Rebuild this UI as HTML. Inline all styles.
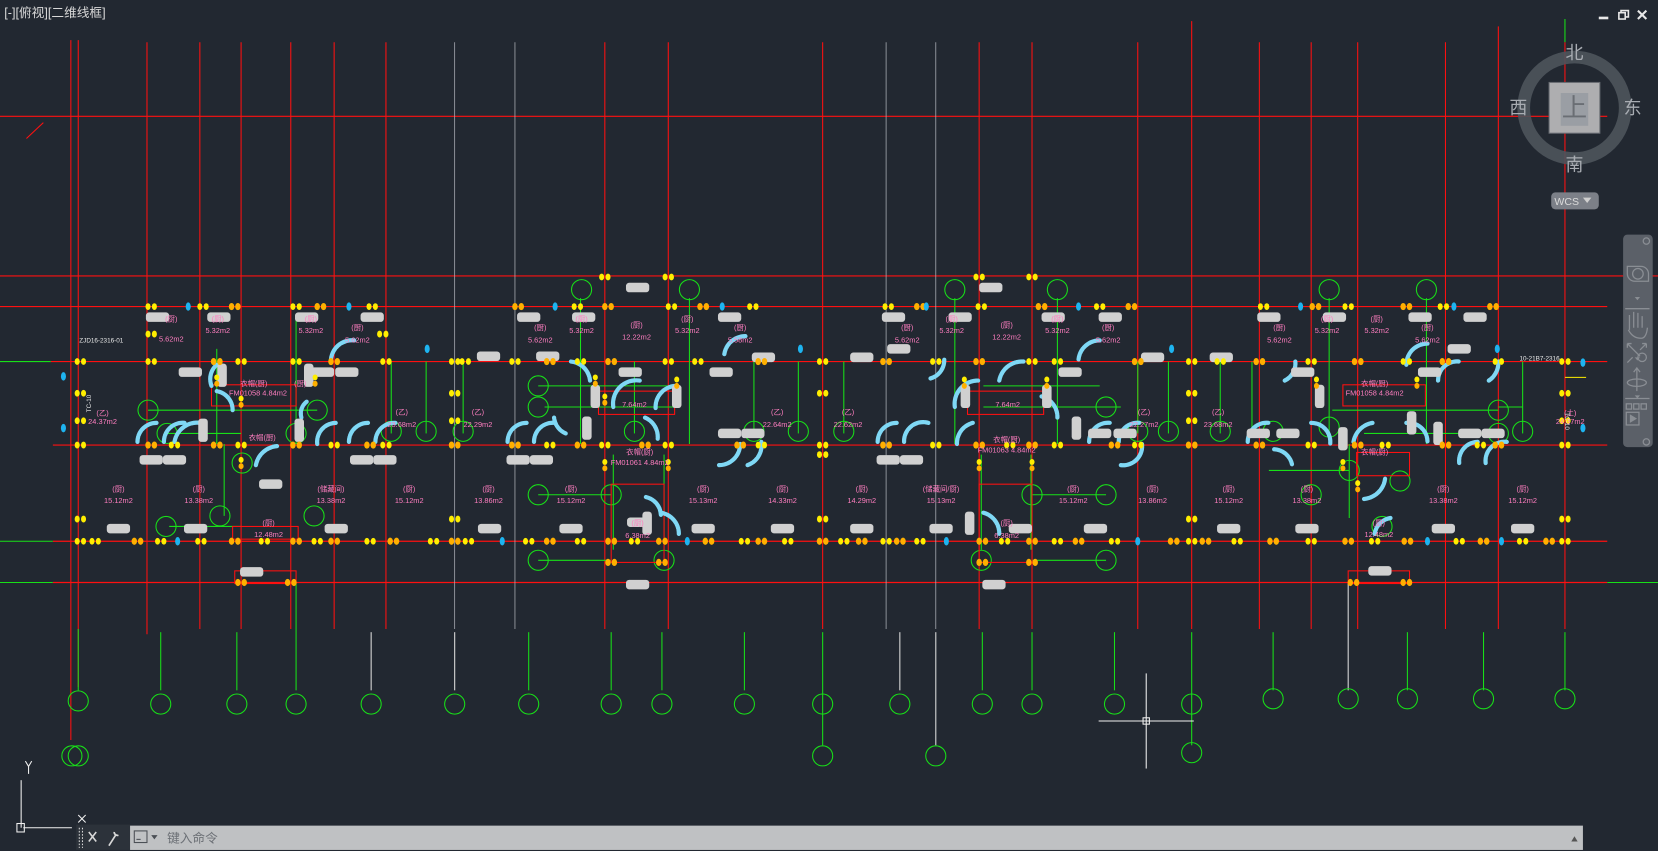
<!DOCTYPE html>
<html><head><meta charset="utf-8">
<style>
html,body{margin:0;padding:0;background:#222831;overflow:hidden}
svg{display:block}
text{font-family:"Liberation Sans","Noto Sans CJK SC",sans-serif}
</style></head><body>
<svg width="1658" height="851" viewBox="0 0 1568 805" preserveAspectRatio="none" xmlns="http://www.w3.org/2000/svg">
<defs>
<g id="p"><ellipse cx="-3" cy="0" rx="2.4" ry="3.2" fill="#ffee00"/><ellipse cx="3" cy="0" rx="2.4" ry="3.2" fill="#ffee00"/></g>
<g id="o"><ellipse cx="-3" cy="0" rx="2.6" ry="3.4" fill="#ffb000"/><ellipse cx="3" cy="0" rx="2.6" ry="3.4" fill="#ffb000"/></g>
<g id="v"><ellipse cx="0" cy="-3" rx="2.4" ry="2.8" fill="#ffee00"/><ellipse cx="0" cy="3" rx="2.4" ry="2.8" fill="#ffb000"/></g>
<ellipse id="b" cx="0" cy="0" rx="2.4" ry="4" fill="#1eb4f0"/>
<rect id="g" x="-11" y="-4.5" width="22" height="9" rx="3" fill="#d0d0d0"/>
<rect id="gv" x="-4.5" y="-11" width="9" height="22" rx="3" fill="#d0d0d0"/>
<circle id="c" r="9.5" fill="none" stroke="#18e018" stroke-width="1"/>
</defs>

<text x="4" y="16" font-size="12" fill="#d8d8d8">[-][俯视][二维线框]</text>

<g stroke="#ff1010" stroke-width="1.1">
<line x1="0" y1="110" x2="1520" y2="110"/>
<line x1="0" y1="261" x2="1568" y2="261"/>
<line x1="0" y1="290" x2="1520" y2="290"/>
<line x1="48" y1="342" x2="1520" y2="342"/>
<line x1="50" y1="421" x2="1520" y2="421"/>
<line x1="50" y1="512" x2="1520" y2="512"/>
<line x1="50" y1="551" x2="1520" y2="551"/>
<line x1="25" y1="131" x2="41" y2="116" stroke-width="1"/>
</g>
<g stroke="#18e018" stroke-width="1">
<line x1="0" y1="342" x2="48" y2="342"/><line x1="0" y1="512" x2="50" y2="512"/><line x1="0" y1="551" x2="50" y2="551"/>
<line x1="1520" y1="551" x2="1568" y2="551"/><line x1="1480" y1="18" x2="1480" y2="40"/>
</g>

<g stroke="#ff1010" stroke-width="1">
<line x1="67" y1="38" x2="67" y2="700"/><line x1="74" y1="38" x2="74" y2="650"/>
<line x1="139" y1="40" x2="139" y2="600"/>
<line x1="189" y1="40" x2="189" y2="595"/><line x1="228" y1="40" x2="228" y2="595"/>
<line x1="275" y1="40" x2="275" y2="595"/>
<line x1="316" y1="40" x2="316" y2="595"/><line x1="365" y1="40" x2="365" y2="595"/>
<line x1="430" y1="40" x2="430" y2="595" stroke="#b0b4ba" stroke-width="0.7"/>
<line x1="487" y1="40" x2="487" y2="595" stroke="#b0b4ba" stroke-width="0.7"/>
<line x1="572" y1="40" x2="572" y2="595"/><line x1="632" y1="40" x2="632" y2="595"/>
<line x1="778" y1="40" x2="778" y2="595"/>
<line x1="838" y1="40" x2="838" y2="595" stroke="#b0b4ba" stroke-width="0.7"/>
<line x1="885" y1="40" x2="885" y2="595" stroke="#b0b4ba" stroke-width="0.7"/>
<line x1="926" y1="40" x2="926" y2="595"/><line x1="976" y1="40" x2="976" y2="595"/>
<line x1="1076" y1="40" x2="1076" y2="595"/><line x1="1127" y1="20" x2="1127" y2="595"/>
<line x1="1191" y1="40" x2="1191" y2="595"/><line x1="1240" y1="40" x2="1240" y2="595"/>
<line x1="1284" y1="40" x2="1284" y2="595"/><line x1="1367" y1="40" x2="1367" y2="595"/>
<line x1="1417" y1="25" x2="1417" y2="595"/><line x1="1480" y1="40" x2="1480" y2="595"/>
</g>

<g stroke="#18e018" stroke-width="1" fill="none">
<line x1="74" y1="595" x2="74" y2="653"/><line x1="152" y1="598" x2="152" y2="653"/>
<line x1="224" y1="598" x2="224" y2="653"/><line x1="280" y1="551" x2="280" y2="653"/>
<line x1="351" y1="598" x2="351" y2="653" stroke="#ddd"/><line x1="430" y1="598" x2="430" y2="653" stroke="#ddd"/>
<line x1="500" y1="598" x2="500" y2="653"/><line x1="578" y1="598" x2="578" y2="653"/>
<line x1="626" y1="598" x2="626" y2="653"/><line x1="704" y1="598" x2="704" y2="653"/>
<line x1="778" y1="598" x2="778" y2="705"/><line x1="851" y1="598" x2="851" y2="653" stroke="#ddd"/>
<line x1="885" y1="598" x2="885" y2="705" stroke="#ddd"/><line x1="929" y1="598" x2="929" y2="653"/>
<line x1="976" y1="598" x2="976" y2="653"/><line x1="1054" y1="598" x2="1054" y2="653"/>
<line x1="1127" y1="598" x2="1127" y2="705"/><line x1="1204" y1="598" x2="1204" y2="653"/>
<line x1="1275" y1="551" x2="1275" y2="653" stroke="#ddd"/><line x1="1331" y1="598" x2="1331" y2="653"/>
<line x1="1403" y1="598" x2="1403" y2="653"/><line x1="1480" y1="598" x2="1480" y2="653"/>
</g>
<g>
<use href="#c" x="74" y="663"/><use href="#c" x="152" y="666"/><use href="#c" x="224" y="666"/><use href="#c" x="280" y="666"/>
<use href="#c" x="351" y="666"/><use href="#c" x="430" y="666"/><use href="#c" x="500" y="666"/><use href="#c" x="578" y="666"/>
<use href="#c" x="626" y="666"/><use href="#c" x="704" y="666"/><use href="#c" x="778" y="666"/><use href="#c" x="851" y="666"/>
<use href="#c" x="929" y="666"/><use href="#c" x="976" y="666"/><use href="#c" x="1054" y="666"/><use href="#c" x="1127" y="666"/>
<use href="#c" x="1204" y="661"/><use href="#c" x="1275" y="661"/><use href="#c" x="1331" y="661"/><use href="#c" x="1403" y="661"/><use href="#c" x="1480" y="661"/>
<use href="#c" x="68" y="715"/><use href="#c" x="74" y="715"/><use href="#c" x="778" y="715"/><use href="#c" x="885" y="715"/><use href="#c" x="1127" y="712"/>
</g>

<g stroke="#18e018" stroke-width="1" fill="none">
<line x1="140" y1="388" x2="300" y2="388"/><line x1="158" y1="410" x2="228" y2="410"/>
<line x1="205" y1="330" x2="205" y2="420"/><line x1="280" y1="300" x2="280" y2="420"/>
<line x1="160" y1="498" x2="228" y2="498"/><line x1="212" y1="420" x2="212" y2="488"/>
<line x1="549" y1="282" x2="549" y2="420"/><line x1="652" y1="282" x2="652" y2="420"/>
<line x1="509" y1="365" x2="640" y2="365"/><line x1="515" y1="385" x2="640" y2="385"/>
<line x1="509" y1="530" x2="578" y2="530"/><line x1="509" y1="468" x2="578" y2="468"/>
<line x1="580" y1="430" x2="580" y2="520"/><line x1="628" y1="430" x2="628" y2="520"/>
<line x1="600" y1="342" x2="600" y2="410"/><line x1="713" y1="342" x2="713" y2="410"/>
<line x1="755" y1="342" x2="755" y2="410"/><line x1="798" y1="342" x2="798" y2="410"/>
<line x1="903" y1="282" x2="903" y2="420"/><line x1="1000" y1="282" x2="1000" y2="420"/>
<line x1="930" y1="365" x2="1040" y2="365"/><line x1="930" y1="385" x2="1060" y2="385"/>
<line x1="976" y1="468" x2="1046" y2="468"/><line x1="976" y1="530" x2="1046" y2="530"/>
<line x1="975" y1="430" x2="975" y2="520"/><line x1="928" y1="430" x2="928" y2="520"/>
<line x1="1076" y1="342" x2="1076" y2="410"/><line x1="1154" y1="342" x2="1154" y2="410"/>
<line x1="1257" y1="282" x2="1257" y2="420"/><line x1="1349" y1="282" x2="1349" y2="420"/>
<line x1="1260" y1="388" x2="1417" y2="388"/><line x1="1290" y1="410" x2="1417" y2="410"/>
<line x1="1276" y1="420" x2="1276" y2="490"/><line x1="1200" y1="445" x2="1276" y2="445"/>
<line x1="1440" y1="342" x2="1440" y2="410"/><line x1="370" y1="342" x2="370" y2="410"/><line x1="403" y1="342" x2="403" y2="410"/>
<line x1="438" y1="342" x2="438" y2="410"/><line x1="1105" y1="342" x2="1105" y2="410"/><line x1="1184" y1="342" x2="1184" y2="410"/>
<line x1="1417" y1="385" x2="1440" y2="385"/><line x1="1480" y1="357" x2="1500" y2="357" stroke="#ffee00"/>
</g>
<g>
<use href="#c" x="140" y="388"/><use href="#c" x="158" y="410"/><use href="#c" x="157" y="498"/><use href="#c" x="208" y="488"/>
<use href="#c" x="297" y="488"/><use href="#c" x="229" y="438"/><use href="#c" x="280" y="410"/><use href="#c" x="300" y="388"/>
<use href="#c" x="550" y="274"/><use href="#c" x="652" y="274"/><use href="#c" x="903" y="274"/><use href="#c" x="1000" y="274"/>
<use href="#c" x="1257" y="274"/><use href="#c" x="1349" y="274"/><use href="#c" x="509" y="365"/><use href="#c" x="509" y="385"/>
<use href="#c" x="509" y="468"/><use href="#c" x="509" y="530"/><use href="#c" x="600" y="408"/><use href="#c" x="713" y="408"/>
<use href="#c" x="755" y="408"/><use href="#c" x="798" y="408"/><use href="#c" x="628" y="530"/><use href="#c" x="578" y="468"/>
<use href="#c" x="1046" y="385"/><use href="#c" x="1046" y="468"/><use href="#c" x="1046" y="530"/><use href="#c" x="976" y="468"/>
<use href="#c" x="928" y="530"/><use href="#c" x="1076" y="408"/><use href="#c" x="1154" y="408"/><use href="#c" x="1105" y="408"/>
<use href="#c" x="1257" y="404"/><use href="#c" x="1417" y="388"/><use href="#c" x="1417" y="410"/><use href="#c" x="1276" y="445"/>
<use href="#c" x="1307" y="498"/><use href="#c" x="1324" y="455"/><use href="#c" x="1240" y="468"/><use href="#c" x="1204" y="408"/>
<use href="#c" x="370" y="408"/><use href="#c" x="438" y="408"/><use href="#c" x="403" y="408"/><use href="#c" x="1440" y="408"/>
</g>

<g stroke="#ff1010" stroke-width="1" fill="none">
<rect x="200" y="364" width="80" height="20"/><rect x="220" y="498" width="62" height="12"/>
<rect x="578" y="458" width="50" height="74"/><rect x="566" y="370" width="72" height="22"/>
<rect x="926" y="458" width="50" height="74"/><rect x="915" y="370" width="72" height="22"/>
<rect x="1270" y="364" width="78" height="20"/><rect x="1283" y="428" width="50" height="22"/>
<rect x="222" y="540" width="58" height="12"/><rect x="1275" y="540" width="58" height="12"/>
</g>

<g stroke="#7fd8f5" stroke-width="4" fill="none" stroke-dasharray="5 1.2" stroke-linecap="round">
<path d="M130 418 A18 18 0 0 1 148 400"/><path d="M155 418 A18 18 0 0 1 175 400"/><path d="M165 418 A22 22 0 0 1 190 400"/>
<path d="M220 388 A18 18 0 0 0 205 370"/><path d="M200 365 A18 18 0 0 1 205 345"/><path d="M242 440 A22 22 0 0 1 262 422"/>
<path d="M285 395 A14 14 0 0 1 290 380"/><path d="M300 420 A18 18 0 0 1 318 400"/><path d="M313 340 A20 20 0 0 1 335 322"/>
<path d="M330 418 A18 18 0 0 1 348 400"/><path d="M355 418 A18 18 0 0 1 374 400"/>
<path d="M480 418 A18 18 0 0 1 498 400"/><path d="M505 418 A18 18 0 0 1 525 400"/><path d="M535 410 A18 18 0 0 1 524 395"/>
<path d="M540 342 A20 20 0 0 1 558 360"/><path d="M580 385 A22 22 0 0 1 605 360"/><path d="M620 386 A20 20 0 0 1 640 365"/>
<path d="M610 395 A20 20 0 0 1 622 415"/><path d="M625 485 A20 20 0 0 1 642 505"/><path d="M685 335 A20 20 0 0 1 705 318"/>
<path d="M680 440 A20 20 0 0 0 700 420"/><path d="M707 440 A20 20 0 0 0 720 418"/>
<path d="M830 418 A18 18 0 0 1 848 400"/><path d="M855 418 A18 18 0 0 1 878 400"/><path d="M880 358 A18 18 0 0 0 893 340"/>
<path d="M903 385 A22 22 0 0 1 925 360"/><path d="M945 360 A22 22 0 0 1 968 342"/><path d="M905 420 A20 20 0 0 1 920 400"/>
<path d="M985 375 A20 20 0 0 1 1000 395"/><path d="M930 485 A20 20 0 0 1 945 505"/><path d="M1020 340 A20 20 0 0 1 1040 322"/>
<path d="M1030 418 A18 18 0 0 1 1050 400"/><path d="M1058 418 A18 18 0 0 1 1078 400"/><path d="M1060 440 A18 18 0 0 0 1080 420"/>
<path d="M1180 418 A18 18 0 0 1 1200 400"/><path d="M1205 425 A18 18 0 0 1 1222 440"/><path d="M1215 360 A18 18 0 0 0 1225 342"/>
<path d="M1240 400 A18 18 0 0 1 1258 420"/><path d="M1290 472 A22 22 0 0 0 1310 452"/><path d="M1300 505 A18 18 0 0 1 1315 490"/>
<path d="M1330 345 A20 20 0 0 1 1350 325"/><path d="M1330 400 A18 18 0 0 1 1350 418"/><path d="M1360 360 A18 18 0 0 1 1380 342"/>
<path d="M1380 438 A18 18 0 0 1 1398 418"/><path d="M1405 438 A18 18 0 0 1 1425 418"/><path d="M1408 360 A20 20 0 0 0 1417 342"/>
<path d="M1280 418 A22 22 0 0 1 1298 400"/><path d="M625 487 A18 18 0 0 0 610 470"/>
</g>

<g>
<use href="#g" x="149" y="300"/><use href="#g" x="207" y="300"/><use href="#g" x="290" y="300"/><use href="#g" x="352" y="300"/>
<use href="#g" x="500" y="300"/><use href="#g" x="603" y="272"/><use href="#g" x="552" y="300"/><use href="#g" x="690" y="300"/>
<use href="#g" x="845" y="300"/><use href="#g" x="908" y="300"/><use href="#g" x="937" y="272"/><use href="#g" x="996" y="300"/>
<use href="#g" x="1050" y="300"/><use href="#g" x="1200" y="300"/><use href="#g" x="1262" y="300"/><use href="#g" x="1343" y="300"/><use href="#g" x="1395" y="300"/>
<use href="#g" x="180" y="352"/><use href="#g" x="305" y="352"/><use href="#g" x="328" y="352"/><use href="#g" x="462" y="337"/>
<use href="#g" x="518" y="337"/><use href="#g" x="596" y="352"/><use href="#g" x="682" y="352"/><use href="#g" x="722" y="338"/>
<use href="#g" x="815" y="338"/><use href="#g" x="850" y="330"/><use href="#g" x="1012" y="352"/><use href="#g" x="1090" y="338"/>
<use href="#g" x="1155" y="338"/><use href="#g" x="1232" y="352"/><use href="#g" x="1352" y="352"/><use href="#g" x="1380" y="330"/>
<use href="#g" x="143" y="435"/><use href="#g" x="165" y="435"/><use href="#g" x="342" y="435"/><use href="#g" x="364" y="435"/>
<use href="#g" x="490" y="435"/><use href="#g" x="512" y="435"/><use href="#g" x="690" y="410"/><use href="#g" x="712" y="410"/>
<use href="#g" x="840" y="435"/><use href="#g" x="862" y="435"/><use href="#g" x="1040" y="410"/><use href="#g" x="1064" y="410"/>
<use href="#g" x="1190" y="410"/><use href="#g" x="1218" y="410"/><use href="#g" x="1390" y="410"/><use href="#g" x="1412" y="410"/>
<use href="#g" x="112" y="500"/><use href="#g" x="185" y="500"/><use href="#g" x="318" y="500"/><use href="#g" x="463" y="500"/>
<use href="#g" x="540" y="500"/><use href="#g" x="604" y="494"/><use href="#g" x="665" y="500"/><use href="#g" x="740" y="500"/>
<use href="#g" x="815" y="500"/><use href="#g" x="890" y="500"/><use href="#g" x="965" y="500"/><use href="#g" x="1036" y="500"/>
<use href="#g" x="1162" y="500"/><use href="#g" x="1236" y="500"/><use href="#g" x="1365" y="500"/><use href="#g" x="1440" y="500"/>
<use href="#g" x="603" y="553"/><use href="#g" x="940" y="553"/><use href="#g" x="256" y="458"/><use href="#g" x="1305" y="540"/><use href="#g" x="238" y="541"/>
<use href="#gv" x="210" y="355"/><use href="#gv" x="292" y="355"/><use href="#gv" x="563" y="375"/><use href="#gv" x="640" y="375"/>
<use href="#gv" x="612" y="495"/><use href="#gv" x="917" y="495"/><use href="#gv" x="913" y="375"/><use href="#gv" x="990" y="375"/>
<use href="#gv" x="1248" y="375"/><use href="#gv" x="1335" y="400"/><use href="#gv" x="1018" y="405"/><use href="#gv" x="555" y="405"/>
<use href="#gv" x="192" y="407"/><use href="#gv" x="283" y="407"/><use href="#gv" x="1270" y="415"/><use href="#gv" x="1360" y="410"/>
</g>

<g>
<use href="#p" x="143" y="290"/><use href="#p" x="192" y="290"/><use href="#o" x="222" y="290"/><use href="#p" x="280" y="290"/><use href="#o" x="303" y="290"/><use href="#p" x="352" y="290"/>
<use href="#p" x="143" y="316"/><use href="#p" x="362" y="316"/><use href="#o" x="490" y="290"/><use href="#p" x="546" y="290"/><use href="#o" x="575" y="290"/><use href="#p" x="635" y="290"/><use href="#o" x="665" y="290"/><use href="#p" x="712" y="290"/>
<use href="#p" x="840" y="290"/><use href="#o" x="870" y="290"/><use href="#p" x="928" y="290"/><use href="#o" x="985" y="290"/><use href="#p" x="1040" y="290"/><use href="#o" x="1070" y="290"/>
<use href="#p" x="1195" y="290"/><use href="#o" x="1244" y="290"/><use href="#p" x="1275" y="290"/><use href="#o" x="1330" y="290"/><use href="#p" x="1365" y="290"/><use href="#o" x="1412" y="290"/>
<use href="#p" x="572" y="262"/><use href="#p" x="632" y="262"/><use href="#p" x="926" y="262"/><use href="#p" x="976" y="262"/>
<use href="#p" x="76" y="342"/><use href="#p" x="143" y="342"/><use href="#o" x="205" y="342"/><use href="#p" x="228" y="342"/><use href="#p" x="280" y="342"/><use href="#o" x="316" y="342"/><use href="#p" x="365" y="342"/><use href="#p" x="430" y="342"/><use href="#p" x="440" y="342"/>
<use href="#p" x="487" y="342"/><use href="#o" x="520" y="342"/><use href="#p" x="549" y="342"/><use href="#o" x="578" y="342"/><use href="#p" x="632" y="342"/><use href="#p" x="660" y="342"/><use href="#o" x="720" y="342"/>
<use href="#p" x="778" y="342"/><use href="#o" x="838" y="342"/><use href="#p" x="885" y="342"/><use href="#o" x="926" y="342"/><use href="#p" x="976" y="342"/><use href="#p" x="1000" y="342"/><use href="#o" x="1076" y="342"/>
<use href="#p" x="1127" y="342"/><use href="#p" x="1154" y="342"/><use href="#o" x="1191" y="342"/><use href="#p" x="1240" y="342"/><use href="#o" x="1284" y="342"/><use href="#p" x="1330" y="342"/><use href="#o" x="1367" y="342"/><use href="#p" x="1417" y="342"/><use href="#p" x="1480" y="342"/>
<use href="#v" x="205" y="360"/><use href="#v" x="228" y="380"/><use href="#v" x="298" y="360"/><use href="#v" x="563" y="360"/><use href="#v" x="572" y="378"/><use href="#v" x="640" y="362"/><use href="#v" x="912" y="362"/><use href="#v" x="990" y="362"/><use href="#v" x="1245" y="362"/><use href="#v" x="1340" y="362"/>
<use href="#p" x="778" y="372"/><use href="#p" x="1127" y="372"/><use href="#p" x="430" y="372"/><use href="#p" x="1480" y="372"/><use href="#p" x="76" y="372"/>
<use href="#p" x="76" y="398"/><use href="#p" x="430" y="398"/><use href="#p" x="1127" y="398"/><use href="#p" x="1480" y="398"/>
<use href="#p" x="76" y="421"/><use href="#o" x="143" y="421"/><use href="#p" x="165" y="421"/><use href="#o" x="205" y="421"/><use href="#p" x="228" y="421"/><use href="#o" x="280" y="421"/><use href="#p" x="316" y="421"/><use href="#o" x="350" y="421"/><use href="#p" x="365" y="421"/><use href="#o" x="430" y="421"/>
<use href="#o" x="487" y="421"/><use href="#p" x="520" y="421"/><use href="#o" x="549" y="421"/><use href="#p" x="572" y="421"/><use href="#o" x="610" y="421"/><use href="#p" x="632" y="421"/><use href="#o" x="700" y="421"/><use href="#p" x="720" y="421"/><use href="#p" x="778" y="421"/><use href="#p" x="778" y="430"/>
<use href="#o" x="838" y="421"/><use href="#p" x="885" y="421"/><use href="#o" x="926" y="421"/><use href="#p" x="955" y="421"/><use href="#o" x="976" y="421"/><use href="#p" x="1000" y="421"/><use href="#o" x="1054" y="421"/><use href="#p" x="1076" y="421"/><use href="#o" x="1127" y="421"/>
<use href="#o" x="1191" y="421"/><use href="#p" x="1240" y="421"/><use href="#o" x="1284" y="421"/><use href="#p" x="1310" y="421"/><use href="#o" x="1367" y="421"/><use href="#p" x="1400" y="421"/><use href="#o" x="1417" y="421"/><use href="#p" x="1480" y="421"/>
<use href="#v" x="228" y="438"/><use href="#v" x="572" y="440"/><use href="#v" x="632" y="440"/><use href="#v" x="926" y="440"/><use href="#v" x="976" y="440"/><use href="#v" x="1270" y="440"/><use href="#v" x="1284" y="460"/>
<use href="#p" x="76" y="491"/><use href="#p" x="430" y="491"/><use href="#p" x="778" y="491"/><use href="#p" x="1127" y="491"/><use href="#p" x="1480" y="491"/>
<use href="#p" x="76" y="512"/><use href="#p" x="90" y="512"/><use href="#o" x="130" y="512"/><use href="#p" x="152" y="512"/><use href="#b" x="168" y="512"/><use href="#p" x="190" y="512"/><use href="#o" x="222" y="512"/><use href="#p" x="250" y="512"/><use href="#o" x="280" y="512"/><use href="#p" x="300" y="512"/>
<use href="#o" x="316" y="512"/><use href="#p" x="350" y="512"/><use href="#o" x="372" y="512"/><use href="#p" x="410" y="512"/><use href="#o" x="430" y="512"/><use href="#p" x="443" y="512"/><use href="#b" x="475" y="512"/><use href="#p" x="500" y="512"/><use href="#o" x="520" y="512"/><use href="#p" x="549" y="512"/>
<use href="#o" x="578" y="512"/><use href="#p" x="600" y="512"/><use href="#o" x="626" y="512"/><use href="#b" x="650" y="512"/><use href="#o" x="670" y="512"/><use href="#p" x="704" y="512"/><use href="#o" x="720" y="512"/><use href="#p" x="745" y="512"/><use href="#o" x="778" y="512"/><use href="#p" x="798" y="512"/>
<use href="#o" x="815" y="512"/><use href="#p" x="838" y="512"/><use href="#o" x="851" y="512"/><use href="#p" x="870" y="512"/><use href="#b" x="895" y="512"/><use href="#o" x="929" y="512"/><use href="#p" x="950" y="512"/><use href="#o" x="976" y="512"/><use href="#p" x="1000" y="512"/>
<use href="#o" x="1020" y="512"/><use href="#p" x="1054" y="512"/><use href="#b" x="1076" y="512"/><use href="#o" x="1110" y="512"/><use href="#p" x="1127" y="512"/><use href="#o" x="1140" y="512"/><use href="#p" x="1170" y="512"/><use href="#o" x="1204" y="512"/><use href="#p" x="1240" y="512"/>
<use href="#o" x="1275" y="512"/><use href="#p" x="1300" y="512"/><use href="#o" x="1331" y="512"/><use href="#b" x="1350" y="512"/><use href="#p" x="1380" y="512"/><use href="#o" x="1403" y="512"/><use href="#b" x="1420" y="512"/><use href="#p" x="1440" y="512"/><use href="#o" x="1465" y="512"/><use href="#p" x="1480" y="512"/>
<use href="#o" x="228" y="551"/><use href="#o" x="275" y="551"/><use href="#o" x="578" y="532"/><use href="#o" x="626" y="532"/><use href="#o" x="929" y="532"/><use href="#o" x="976" y="532"/><use href="#o" x="1280" y="551"/><use href="#o" x="1330" y="551"/>
<use href="#b" x="60" y="356"/><use href="#b" x="60" y="405"/><use href="#b" x="1497" y="343"/><use href="#b" x="1497" y="405"/>
<use href="#b" x="178" y="290"/><use href="#b" x="330" y="290"/><use href="#b" x="525" y="290"/><use href="#b" x="683" y="290"/><use href="#b" x="876" y="290"/><use href="#b" x="1020" y="290"/><use href="#b" x="1230" y="290"/><use href="#b" x="1375" y="290"/>
<use href="#b" x="404" y="330"/><use href="#b" x="757" y="330"/><use href="#b" x="1108" y="330"/><use href="#b" x="1416" y="330"/>
</g>

<g fill="#ff7ec0" font-size="7" text-anchor="middle">
<text x="162" y="304">(厨)</text><text x="162" y="323">5.62m2</text><text x="206" y="304">(厨)</text><text x="206" y="315">5.32m2</text>
<text x="294" y="304">(厨)</text><text x="294" y="315">5.32m2</text><text x="338" y="312">(厨)</text><text x="338" y="324">5.62m2</text>
<text x="511" y="312">(厨)</text><text x="511" y="324">5.62m2</text><text x="550" y="304">(厨)</text><text x="550" y="315">5.32m2</text>
<text x="602" y="310">(厨)</text><text x="602" y="321">12.22m2</text><text x="650" y="304">(厨)</text><text x="650" y="315">5.32m2</text><text x="700" y="312">(厨)</text><text x="700" y="324">5.58m2</text>
<text x="858" y="312">(厨)</text><text x="858" y="324">5.62m2</text><text x="900" y="304">(厨)</text><text x="900" y="315">5.32m2</text>
<text x="952" y="310">(厨)</text><text x="952" y="321">12.22m2</text><text x="1000" y="304">(厨)</text><text x="1000" y="315">5.32m2</text><text x="1048" y="312">(厨)</text><text x="1048" y="324">5.62m2</text>
<text x="1210" y="312">(厨)</text><text x="1210" y="324">5.62m2</text><text x="1255" y="304">(厨)</text><text x="1255" y="315">5.32m2</text>
<text x="1302" y="304">(厨)</text><text x="1302" y="315">5.32m2</text><text x="1350" y="312">(厨)</text><text x="1350" y="324">5.62m2</text>
<text x="97" y="393">(乙)</text><text x="97" y="401">24.37m2</text><text x="380" y="392">(乙)</text><text x="380" y="404">23.68m2</text>
<text x="452" y="392">(乙)</text><text x="452" y="404">22.29m2</text><text x="735" y="392">(乙)</text><text x="735" y="404">22.64m2</text>
<text x="802" y="392">(乙)</text><text x="802" y="404">22.62m2</text><text x="1082" y="392">(乙)</text><text x="1082" y="404">22.27m2</text>
<text x="1152" y="392">(乙)</text><text x="1152" y="404">23.68m2</text><text x="1485" y="393">(土)</text><text x="1485" y="401">24.37m2</text>
<text x="240" y="365">衣帽(厨)</text><text x="244" y="374">FM01058 4.84m2</text><text x="284" y="365">(厨)</text>
<text x="605" y="430">衣帽(厨)</text><text x="605" y="440">FM01061 4.84m2</text><text x="952" y="418">衣帽(厨)</text><text x="952" y="428">FM01063 4.84m2</text>
<text x="1300" y="365">衣帽(厨)</text><text x="1300" y="374">FM01058 4.84m2</text><text x="953" y="385">7.64m2</text><text x="600" y="385">7.64m2</text>
<text x="248" y="416">衣帽(厨)</text><text x="1300" y="430">衣帽(厨)</text>
<text x="112" y="465">(厨)</text><text x="112" y="476">15.12m2</text><text x="188" y="465">(厨)</text><text x="188" y="476">13.38m2</text>
<text x="313" y="465">(储藏间)</text><text x="313" y="476">13.38m2</text><text x="387" y="465">(厨)</text><text x="387" y="476">15.12m2</text>
<text x="462" y="465">(厨)</text><text x="462" y="476">13.86m2</text><text x="540" y="465">(厨)</text><text x="540" y="476">15.12m2</text>
<text x="665" y="465">(厨)</text><text x="665" y="476">15.13m2</text><text x="740" y="465">(厨)</text><text x="740" y="476">14.33m2</text>
<text x="815" y="465">(厨)</text><text x="815" y="476">14.29m2</text><text x="890" y="465">(储藏间/厨)</text><text x="890" y="476">15.13m2</text>
<text x="1015" y="465">(厨)</text><text x="1015" y="476">15.12m2</text><text x="1090" y="465">(厨)</text><text x="1090" y="476">13.86m2</text>
<text x="1162" y="465">(厨)</text><text x="1162" y="476">15.12m2</text><text x="1236" y="465">(厨)</text><text x="1236" y="476">13.38m2</text>
<text x="1365" y="465">(厨)</text><text x="1365" y="476">13.38m2</text><text x="1440" y="465">(厨)</text><text x="1440" y="476">15.12m2</text>
<text x="254" y="497">(厨)</text><text x="254" y="508">12.48m2</text><text x="603" y="497">(厨)</text><text x="603" y="509">6.38m2</text>
<text x="952" y="497">(厨)</text><text x="952" y="509">6.38m2</text><text x="1304" y="497">(厨)</text><text x="1304" y="508">12.48m2</text>
</g>
<g fill="#e8e8e8" font-size="6">
<text x="75" y="324">ZJD16-2316-01</text><text x="1437" y="341">10-21B7-2316</text>
<text x="86" y="390" transform="rotate(-90 86 390)">TC-10</text><text x="1480" y="390" transform="rotate(90 1480 390)">TC-10</text>
</g>

<g stroke="#f0f0f0" stroke-width="1" fill="none">
<line x1="1039" y1="682" x2="1129" y2="682"/><line x1="1084" y1="637" x2="1084" y2="727"/>
<rect x="1081" y="679" width="6" height="6"/>
</g>

<circle cx="1489" cy="102" r="48" fill="none" stroke="#4e545c" stroke-opacity="0.9" stroke-width="12"/>
<rect x="1465" y="78" width="48" height="48" fill="#aeaeb0" stroke="#6a6e74"/>
<rect x="1476" y="88" width="26" height="31" fill="#9a9ea4"/>
<g fill="#a8acb2" font-size="17" text-anchor="middle">
<text x="1489" y="56" font-family="Noto Sans CJK SC,sans-serif">北</text>
<text x="1436" y="108" font-family="Noto Sans CJK SC,sans-serif">西</text>
<text x="1544" y="108" font-family="Noto Sans CJK SC,sans-serif">东</text>
<text x="1489" y="162" font-family="Noto Sans CJK SC,sans-serif">南</text>
<text x="1489" y="110" font-family="Noto Sans CJK SC,sans-serif" fill="#6a6e74" font-size="24">上</text>
</g>
<rect x="1467" y="182" width="45" height="16" rx="4" fill="#7c8088"/>
<text x="1470" y="194" font-size="10" fill="#dadada">WCS</text>
<path d="M1497 187 L1505 187 L1501 192 Z" fill="#cfcfcf"/>

<g stroke="#e8e8e8" stroke-width="2" fill="none">
<line x1="1512" y1="17" x2="1521" y2="17" stroke-width="2.5"/>
<rect x="1531" y="12" width="6" height="6" stroke-width="1.5"/><path d="M1533 12 V10 H1540 V16 H1537" stroke-width="1.5"/>
<path d="M1549 10 L1557 18 M1557 10 L1549 18"/>
</g>

<rect x="1535" y="222" width="28" height="201" rx="4" fill="#5b6068"/>
<g stroke="#8a8e94" stroke-width="1.2" fill="none">
<circle cx="1557" cy="228" r="3"/>
<path d="M1539 252 h13 a7 7 0 0 1 7 7 v7 h-13 a7 7 0 0 1 -7 -7z"/><circle cx="1549" cy="259" r="5"/>
<line x1="1537" y1="292" x2="1560" y2="292"/>
<path d="M1541 312 v-14 M1545 310 v-15 M1549 310 v-14 M1553 310 v-11 M1540 312 q4 8 12 8 q5 0 6 -10"/>
<path d="M1539 325 l12 12 M1539 325 h4 M1539 325 v4 M1557 325 l-6 6 M1557 325 h-4 M1557 325 v4 M1539 343 l5 -5"/><circle cx="1553" cy="338" r="4"/>
<path d="M1548 348 v22 M1545 352 l3 -4 l3 4"/><ellipse cx="1548" cy="362" rx="9" ry="3.5"/>
<line x1="1537" y1="377" x2="1560" y2="377"/>
<rect x="1538" y="382" width="5" height="5"/><rect x="1545" y="382" width="5" height="5"/><rect x="1552" y="382" width="5" height="5"/>
<rect x="1538" y="390" width="12" height="12"/><path d="M1542 393 l5 3 l-5 3z" fill="#8a8e94"/>
<circle cx="1557" cy="418" r="3"/>
</g>
<g fill="#8a8e94"><path d="M1546 281 h5 l-2.5 3z"/><path d="M1546 338 h5 l-2.5 3z"/><path d="M1546 374 h5 l-2.5 3z"/></g>

<g stroke="#f0f0f0" stroke-width="1" fill="none">
<line x1="20" y1="738" x2="20" y2="783"/><line x1="22" y1="783" x2="68" y2="783"/>
<rect x="16" y="779" width="7" height="8"/>
<path d="M24 720 L27 725 L30 720 M27 725 V732"/>
<path d="M74 771 L81 778 M81 771 L74 778"/>
</g>

<rect x="72" y="780" width="51" height="24" fill="#2c323a"/>
<g stroke="#d8d8d8" stroke-width="1" fill="none">
<line x1="75" y1="783" x2="75" y2="802" stroke-dasharray="1.5 1.5"/><line x1="78" y1="783" x2="78" y2="802" stroke-dasharray="1.5 1.5"/>
<path d="M84 787 L91 796 M91 787 L84 796" stroke-width="1.5"/>
<path d="M103 800 L110 789 M108 787 a3 3 0 0 0 4 3" stroke-width="1.6"/>
</g>
<rect x="123" y="781" width="1374" height="23" fill="#bfc1c3"/>
<rect x="127" y="786" width="12" height="11" fill="none" stroke="#4a4e54"/>
<line x1="129" y1="794" x2="133" y2="794" stroke="#4a4e54"/>
<path d="M143 790 h6 l-3 4z" fill="#4a4e54"/>
<text x="158" y="797" font-size="12" fill="#6c7076" font-family="Liberation Sans,Noto Sans CJK SC,sans-serif">键入命令</text>
<path d="M1486 796 l3 -5 l3 5z" fill="#555"/>
</svg>
</body></html>
